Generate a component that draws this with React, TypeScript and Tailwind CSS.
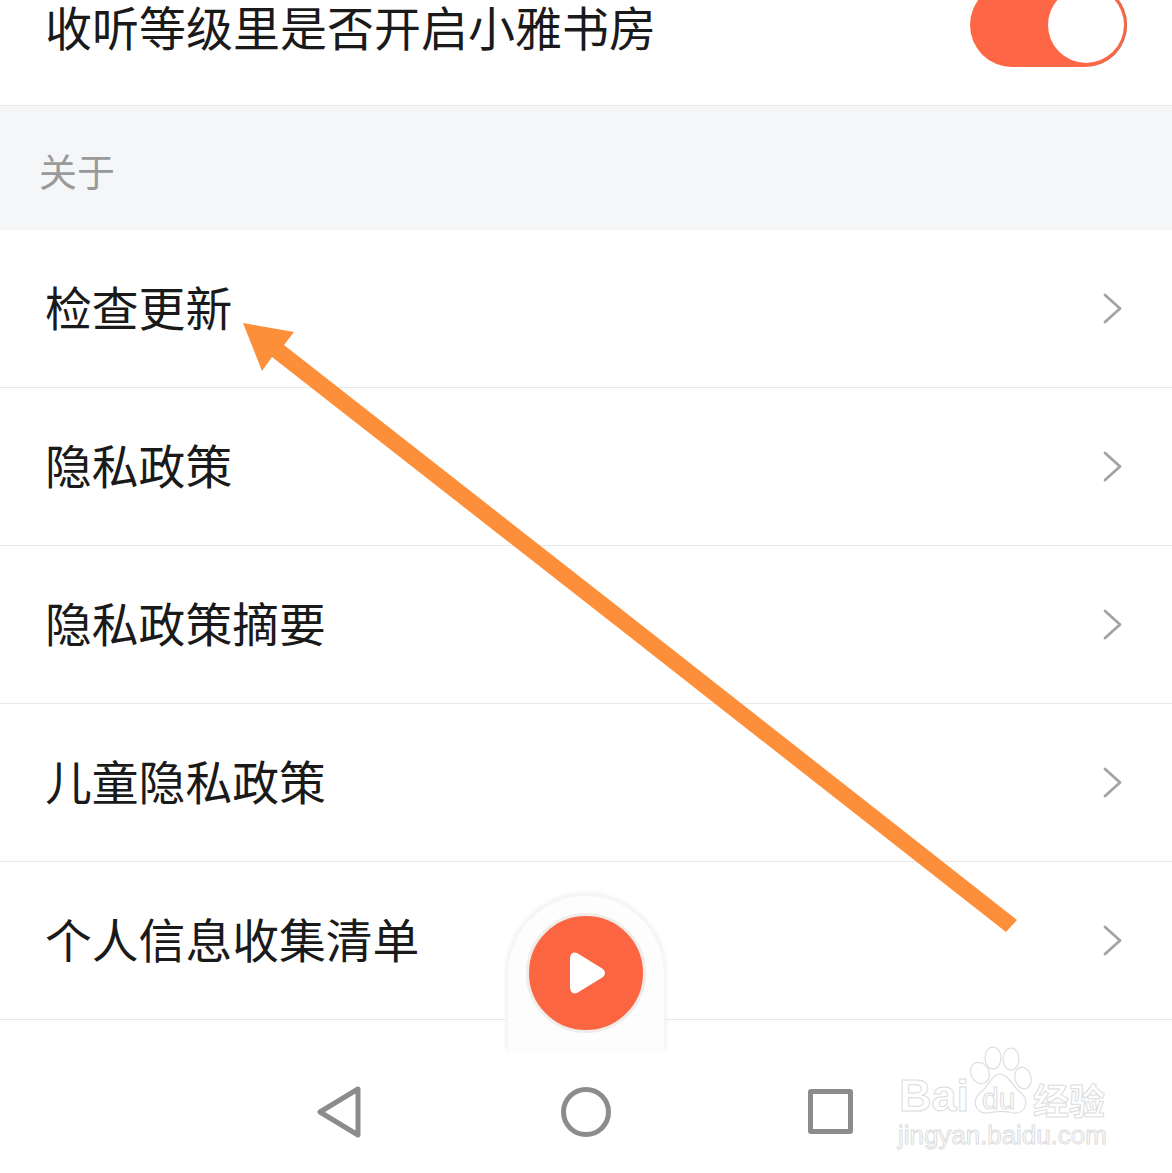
const font = "font-['Noto_Sans_CJK_SC','Noto_Sans',sans-serif]";

function Chevron() {
  return (
    <svg width="20" height="32" viewBox="0 0 20 32" fill="none" className="shrink-0">
      <path d="M3 2 L18 15.5 L3 29" stroke="#a3a3a3" strokeWidth="2.8" strokeLinecap="round" strokeLinejoin="round" />
    </svg>
  );
}

function Row({ label }: { label: string }) {
  return (
    <div className="flex h-[158px] items-center justify-between border-b border-[#e9e9e9] pl-[45px] pr-[50px]">
      <span className="pb-[4px] text-[46.8px] leading-none text-[#1a1a1a]">{label}</span>
      <Chevron />
    </div>
  );
}

const strokeText = "text-white [-webkit-text-stroke:1px_#dcdcdc]";

function Watermark() {
  return (
    <div className="pointer-events-none absolute left-[898px] top-[1046px] h-[104px] w-[212px]">
      <svg width="64" height="72" viewBox="0 0 64 72" fill="none" className="absolute left-[72px] top-0">
        <g stroke="#dedede" strokeWidth="1.2" fill="#fff">
          <ellipse cx="10" cy="27" rx="9" ry="11" transform="rotate(-25 10 27)" />
          <ellipse cx="23" cy="12" rx="8" ry="11" />
          <ellipse cx="41" cy="13" rx="8" ry="11" />
          <ellipse cx="53" cy="32" rx="8" ry="11" transform="rotate(-15 53 32)" />
          <path d="M30 28 C38 28 42 40 50 46 C60 54 56 68 44 67 C36 65 26 65 18 67 C5 68 1 54 11 46 C19 40 22 28 30 28 Z" />
        </g>
      </svg>
      <span className={`absolute left-[1px] top-[25px] font-['Liberation_Sans',sans-serif] text-[45px] font-bold leading-[50px] ${strokeText}`}>Bai</span>
      <span className={`absolute left-[84px] top-[36px] font-['Liberation_Sans',sans-serif] text-[30px] leading-[34px] ${strokeText}`}>du</span>
      <span className={`absolute left-[135px] top-[29px] text-[36px] font-bold leading-[48px] ${strokeText}`}>经验</span>
      <span className={`absolute left-0 top-[76px] font-['Liberation_Sans',sans-serif] text-[25.9px] leading-[26px] whitespace-nowrap ${strokeText}`}>jingyan.baidu.com</span>
    </div>
  );
}

function NavBar() {
  return (
    <div className="mt-auto flex h-[123px] items-center bg-white pl-[317px]">
      <svg width="46" height="52" viewBox="0 0 46 52" fill="none" className="shrink-0">
        <path d="M41 3 L3 26 L41 49 Z" stroke="#8c8c8c" strokeWidth="5" strokeLinejoin="round" />
      </svg>
      <div className="ml-[198px] h-[50px] w-[50px] shrink-0 rounded-full border-[5px] border-[#8c8c8c]" />
      <div className="ml-[197px] h-[45px] w-[45px] shrink-0 rounded-[3px] border-[5px] border-[#8c8c8c]" />
    </div>
  );
}

export default function App() {
  return (
    <div className={`relative flex h-[1173px] w-[1172px] flex-col overflow-hidden bg-white ${font}`}>
      <div className="flex h-[106px] shrink-0 items-start justify-between border-b border-[#e9e9e9] px-[45px] pt-[2px]">
        <span className="text-[47px] leading-none text-[#1a1a1a]">收听等级里是否开启小雅书房</span>
        <div className="-mt-[19px] flex h-[84px] w-[157px] items-center justify-end rounded-full bg-[#fd6745] pr-[3px] shadow-[inset_-1px_0_0_#c96f5a]">
          <div className="h-[76px] w-[76px] rounded-full bg-white" />
        </div>
      </div>
      <div className="flex h-[124px] shrink-0 items-center bg-[#f5f6f8] pl-[39px] pt-[3px]">
        <span className="text-[38px] leading-none text-[#9a9a9a]">关于</span>
      </div>
      <Row label="检查更新" />
      <Row label="隐私政策" />
      <Row label="隐私政策摘要" />
      <Row label="儿童隐私政策" />
      <Row label="个人信息收集清单" />
      <NavBar />

      {/* floating player */}
      <div className="absolute left-[506px] top-[894px] flex h-[156px] w-[160px] justify-center rounded-t-[80px] border-x-[2px] border-t-[2px] border-[#f5f5f5] bg-[#fdfdfd] pt-[17px] shadow-[0_-1px_5px_#efefef]">
        <div className="flex h-[120px] w-[120px] items-center justify-center rounded-full border-[3px] border-[#efece9] bg-[#fb6541]">
          <svg width="38" height="46" viewBox="0 0 38 46" className="ml-[4px]">
            <path d="M8 3 L34 19 Q38 23 34 27 L8 43 Q2 45 1 38 L1 8 Q2 1 8 3 Z" fill="#fff" />
          </svg>
        </div>
      </div>

      <Watermark />

      {/* annotation arrow */}
      <svg width="1172" height="1173" viewBox="0 0 1172 1173" className="pointer-events-none absolute left-0 top-0">
        <path d="M243 323 L294 332 L284 345 L630 616 L1017 920 L1006 932 L630 637 L272 357 L262 371 Z" fill="#fd8f3a" />
      </svg>
    </div>
  );
}
